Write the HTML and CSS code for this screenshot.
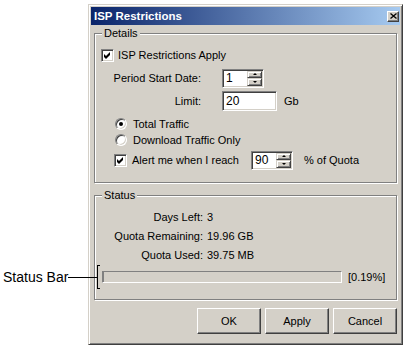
FILE: index.html
```html
<!DOCTYPE html>
<html lang="en">
<head>
    <meta charset="UTF-8">
    <title>ISP Restrictions</title>
    <link rel="stylesheet" href="styles.css">
</head>
<body>
    <div class="page">
        <div class="dialog">
            <div class="titlebar">
                <span class="title">ISP Restrictions</span>
                <span class="close">
                    <svg width="7" height="6" viewBox="0 0 7 6"><path d="M0.5 0.5 L6.5 5.5 M6.5 0.5 L0.5 5.5" stroke="#000" stroke-width="1.3"/></svg>
                </span>
            </div>

            <div class="content">
                <div class="group details">
                    <span class="group-title">Details</span>

                    <div class="row row-apply">
                        <span class="check"><svg width="7" height="7" viewBox="0 0 7 7"><polygon points="0,2 2,4 6,0 6,3 2,7 0,5" fill="#000"/></svg></span>
                        <span>ISP Restrictions Apply</span>
                    </div>

                    <div class="row row-field row-period">
                        <span class="field-label">Period Start Date:</span>
                        <span class="spin">
                            <span class="spin-value">1</span>
                            <span class="spin-buttons">
                                <span class="spin-btn"><i class="arrow-up"></i></span>
                                <span class="spin-btn"><i class="arrow-down"></i></span>
                            </span>
                        </span>
                    </div>

                    <div class="row row-field row-limit">
                        <span class="field-label">Limit:</span>
                        <span class="text-input">20</span>
                        <span class="unit">Gb</span>
                    </div>

                    <div class="row row-option row-total">
                        <span class="radio selected"></span>
                        <span>Total Traffic</span>
                    </div>

                    <div class="row row-option row-download">
                        <span class="radio"></span>
                        <span>Download Traffic Only</span>
                    </div>

                    <div class="row row-option row-alert">
                        <span class="check"><svg width="7" height="7" viewBox="0 0 7 7"><polygon points="0,2 2,4 6,0 6,3 2,7 0,5" fill="#000"/></svg></span>
                        <span class="alert-text">Alert me when I reach</span>
                        <span class="spin">
                            <span class="spin-value">90</span>
                            <span class="spin-buttons">
                                <span class="spin-btn"><i class="arrow-up"></i></span>
                                <span class="spin-btn"><i class="arrow-down"></i></span>
                            </span>
                        </span>
                        <span class="quota-text">% of Quota</span>
                    </div>
                </div>

                <div class="group status">
                    <span class="group-title">Status</span>

                    <div class="stats">
                        <span class="stat-label">Days Left:</span>
                        <span>3</span>
                        <span class="stat-label">Quota Remaining:</span>
                        <span>19.96 GB</span>
                        <span class="stat-label">Quota Used:</span>
                        <span>39.75 MB</span>
                    </div>

                    <div class="progress-row">
                        <div class="progress"><div class="progress-fill" style="width: 0.19%"></div></div>
                        <span>[0.19%]</span>
                    </div>
                </div>

                <div class="buttons">
                    <button class="btn">OK</button>
                    <button class="btn">Apply</button>
                    <button class="btn">Cancel</button>
                </div>
            </div>
        </div>

        <!-- callout pointing at the progress bar -->
        <div class="callout">
            <span class="callout-text">Status Bar</span>
            <span class="callout-line"></span>
            <span class="callout-bracket"></span>
        </div>
    </div>
</body>
</html>
```

FILE: styles.css
```css
body {
    margin: 0;
    background: #fff;
    font-family: "Liberation Sans", Arial, sans-serif;
    font-size: 11px;
    color: #000;
}
.page {
    position: relative;
    padding: 4px 0 0 88px;
}
.dialog {
    width: 315px;
    height: 341px;
    box-sizing: border-box;
    background: #d4d0c8;
    border: 1px solid;
    border-color: #d4d0c8 #404040 #404040 #d4d0c8;
    box-shadow: inset 1px 1px #fff, inset -1px -1px #808080;
    padding: 2px;
}
.titlebar {
    height: 18px;
    display: flex;
    align-items: center;
    justify-content: space-between;
    padding: 0 1px 0 3px;
    background: linear-gradient(to right, #0a246a, #a6caf0);
    color: #fff;
    font-weight: bold;
    font-size: 11.5px;
}
.close {
    width: 12px;
    height: 11px;
    box-sizing: border-box;
    display: flex;
    align-items: center;
    justify-content: center;
    background: #d4d0c8;
    border: 1px solid;
    border-color: #fff #404040 #404040 #fff;
    box-shadow: inset -1px -1px #808080;
}
.content {
    padding: 8px 3px 0;
}

/* etched group boxes */
.group {
    position: relative;
    box-sizing: border-box;
    border: 1px solid #808080;
    box-shadow: inset 1px 1px #fff, 1px 1px #fff;
}
.details {
    height: 150px;
}
.status {
    height: 105px;
    margin-top: 12px;
}
.group-title {
    position: absolute;
    top: -7px;
    left: 7px;
    padding: 0 2px;
    line-height: 13px;
    background: #d4d0c8;
}

.row {
    display: flex;
    align-items: center;
}
.row-apply {
    height: 14px;
    margin-top: 14px;
    padding-left: 6px;
}
.row-field {
    height: 20px;
    padding-left: 18px;
}
.row-period {
    margin-top: 6px;
}
.row-limit {
    margin-top: 3px;
}
.field-label {
    width: 88px;
    text-align: right;
    margin-right: 21px;
}
.unit {
    margin-left: 7px;
}
.row-option {
    padding-left: 19px;
}
.row-total {
    height: 14px;
    margin-top: 6px;
}
.row-download {
    height: 14px;
    margin-top: 2px;
}
.row-alert {
    height: 20px;
    margin-top: 3px;
}
.alert-text {
    margin-right: 12px;
}
.quota-text {
    margin-left: 11px;
}

/* sunken controls */
.check, .radio, .spin, .text-input {
    box-sizing: border-box;
    background: #fff;
    border: 1px solid;
    border-color: #808080 #fff #fff #808080;
    box-shadow: inset 1px 1px #404040, inset -1px -1px #d4d0c8;
}
.check {
    width: 13px;
    height: 13px;
    margin-right: 4px;
    display: flex;
    align-items: center;
    justify-content: center;
}
.row-option .check {
    margin-right: 5px;
}
.radio {
    position: relative;
    width: 12px;
    height: 12px;
    border-radius: 50%;
    margin: 0 6px 0 1px;
}
.radio.selected::after {
    content: "";
    position: absolute;
    left: 3px;
    top: 3px;
    width: 4px;
    height: 4px;
    border-radius: 50%;
    background: #000;
}
.spin {
    width: 42px;
    height: 19px;
    display: flex;
    padding: 1px;
}
.spin-value {
    flex: 1;
    padding-left: 2px;
    line-height: 15px;
    font-size: 12px;
}
.spin-buttons {
    width: 15px;
    display: flex;
    flex-direction: column;
}
.spin-btn {
    flex: 1;
    box-sizing: border-box;
    display: flex;
    align-items: center;
    justify-content: center;
    background: #d4d0c8;
    border: 1px solid;
    border-color: #d4d0c8 #404040 #404040 #d4d0c8;
    box-shadow: inset 1px 1px #fff, inset -1px -1px #808080;
}
.arrow-up, .arrow-down {
    width: 0;
    height: 0;
    border-left: 2px solid transparent;
    border-right: 2px solid transparent;
}
.arrow-up {
    border-bottom: 2px solid #000;
}
.arrow-down {
    border-top: 2px solid #000;
}
.text-input {
    width: 55px;
    height: 20px;
    padding: 0 3px;
    line-height: 18px;
    font-size: 12px;
}

/* status */
.stats {
    display: grid;
    grid-template-columns: 92px auto;
    column-gap: 4px;
    margin-top: 12px;
    padding-left: 16px;
    line-height: 19px;
}
.stat-label {
    text-align: right;
}
.progress-row {
    display: flex;
    align-items: center;
    height: 12px;
    margin-top: 6px;
    padding-left: 7px;
}
.progress {
    width: 240px;
    height: 12px;
    box-sizing: border-box;
    margin-right: 6px;
    border: 1px solid;
    border-color: #808080 #fff #fff #808080;
}
.progress-fill {
    height: 100%;
    min-width: 1px;
    background: #808080;
}

.buttons {
    display: flex;
    justify-content: flex-end;
    gap: 4px;
    margin-top: 8px;
}
.btn {
    width: 64px;
    height: 26px;
    box-sizing: border-box;
    padding: 0;
    font-family: inherit;
    font-size: 11px;
    color: #000;
    background: #d4d0c8;
    border: 1px solid;
    border-color: #fff #404040 #404040 #fff;
    box-shadow: inset -1px -1px #808080;
}

.callout {
    position: absolute;
    left: 3px;
    top: 265px;
    height: 24px;
    display: flex;
    align-items: center;
}
.callout-text {
    font-size: 14px;
}
.callout-line {
    width: 29px;
    height: 1px;
    background: #000;
}
.callout-bracket {
    width: 3px;
    height: 24px;
    box-sizing: border-box;
    border: 1px solid #000;
    border-right: none;
}
```
